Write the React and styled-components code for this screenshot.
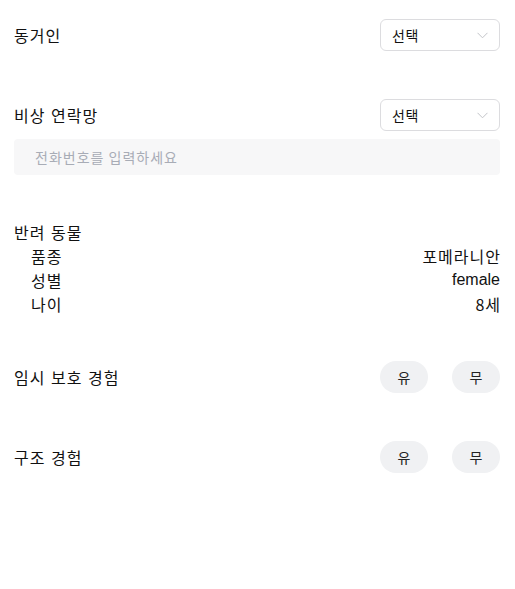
import React from "react";
import styled, { createGlobalStyle } from "styled-components";

const Global = createGlobalStyle`
  html, body { margin: 0; padding: 0; background: #fff; }
  body {
    font-family: "Noto Sans CJK KR", "Noto Sans", sans-serif;
    color: #111;
  }
  * { box-sizing: border-box; }
`;

const Page = styled.div`
  padding: 19px 15px 40px 14px;
  display: flex;
  flex-direction: column;
`;

const Row = styled.div`
  display: flex;
  align-items: center;
  justify-content: space-between;
  height: 32px;
  margin-top: ${(p) => p.$mt || 0}px;
`;

const Label = styled.span`
  font-size: 16px;
  line-height: 24px;
  letter-spacing: 1px;
  word-spacing: 1px;
  color: #111;
`;

const Select = styled.div`
  width: 120px;
  height: 32px;
  border: 1px solid #dcdcdf;
  border-radius: 6px;
  display: flex;
  align-items: center;
  justify-content: space-between;
  padding: 0 11px 0 11px;
  font-size: 14px;
  letter-spacing: 0.5px;
  color: #111;
`;

const Input = styled.input`
  margin-top: 8px;
  height: 36px;
  border: none;
  outline: none;
  background: #f7f7f8;
  border-radius: 4px;
  padding: 0 0 0 21px;
  font-family: inherit;
  font-size: 14px;
  letter-spacing: 1px;
  color: #111;
  &::placeholder { color: #a8acb6; }
`;

const PetSection = styled.div`
  margin-top: 45px;
  display: flex;
  flex-direction: column;
`;

const PetLine = styled.div`
  display: flex;
  justify-content: space-between;
  font-size: 16px;
  line-height: 24px;
  padding-left: ${(p) => (p.$sub ? 17 : 0)}px;
`;

const Text = styled.span`
  font-family: ${(p) =>
    p.$latin ? `"Liberation Sans", sans-serif` : "inherit"};
  letter-spacing: ${(p) => (p.$latin ? 0 : 1)}px;
  word-spacing: 1px;
  margin-right: ${(p) => (p.$latin ? 0 : -1)}px;
`;

const Toggles = styled.div`
  display: flex;
  gap: 24px;
`;

const Pill = styled.button`
  width: 48px;
  height: 32px;
  border: none;
  border-radius: 16px;
  background: #f0f1f3;
  font-family: inherit;
  font-size: 14px;
  color: #222;
  padding: 0;
`;

const Chevron = () => (
  <svg width="11" height="7" viewBox="0 0 11 7" fill="none">
    <path d="M0.5 0.8 L5.5 5.8 L10.5 0.8" stroke="#c2c4c8" strokeWidth="1" />
  </svg>
);

const SelectBox = () => (
  <Select>
    <span>선택</span>
    <Chevron />
  </Select>
);

const YesNo = () => (
  <Toggles>
    <Pill>유</Pill>
    <Pill>무</Pill>
  </Toggles>
);

export default function App() {
  return (
    <>
      <Global />
      <Page>
        <Row>
          <Label>동거인</Label>
          <SelectBox />
        </Row>
        <Row $mt={48}>
          <Label>비상 연락망</Label>
          <SelectBox />
        </Row>
        <Input placeholder="전화번호를 입력하세요" />
        <PetSection>
          <PetLine>
            <Text>반려 동물</Text>
          </PetLine>
          <PetLine $sub>
            <Text>품종</Text>
            <Text>포메라니안</Text>
          </PetLine>
          <PetLine $sub>
            <Text>성별</Text>
            <Text $latin>female</Text>
          </PetLine>
          <PetLine $sub>
            <Text>나이</Text>
            <Text>8세</Text>
          </PetLine>
        </PetSection>
        <Row $mt={45}>
          <Label>임시 보호 경험</Label>
          <YesNo />
        </Row>
        <Row $mt={48}>
          <Label>구조 경험</Label>
          <YesNo />
        </Row>
      </Page>
    </>
  );
}
